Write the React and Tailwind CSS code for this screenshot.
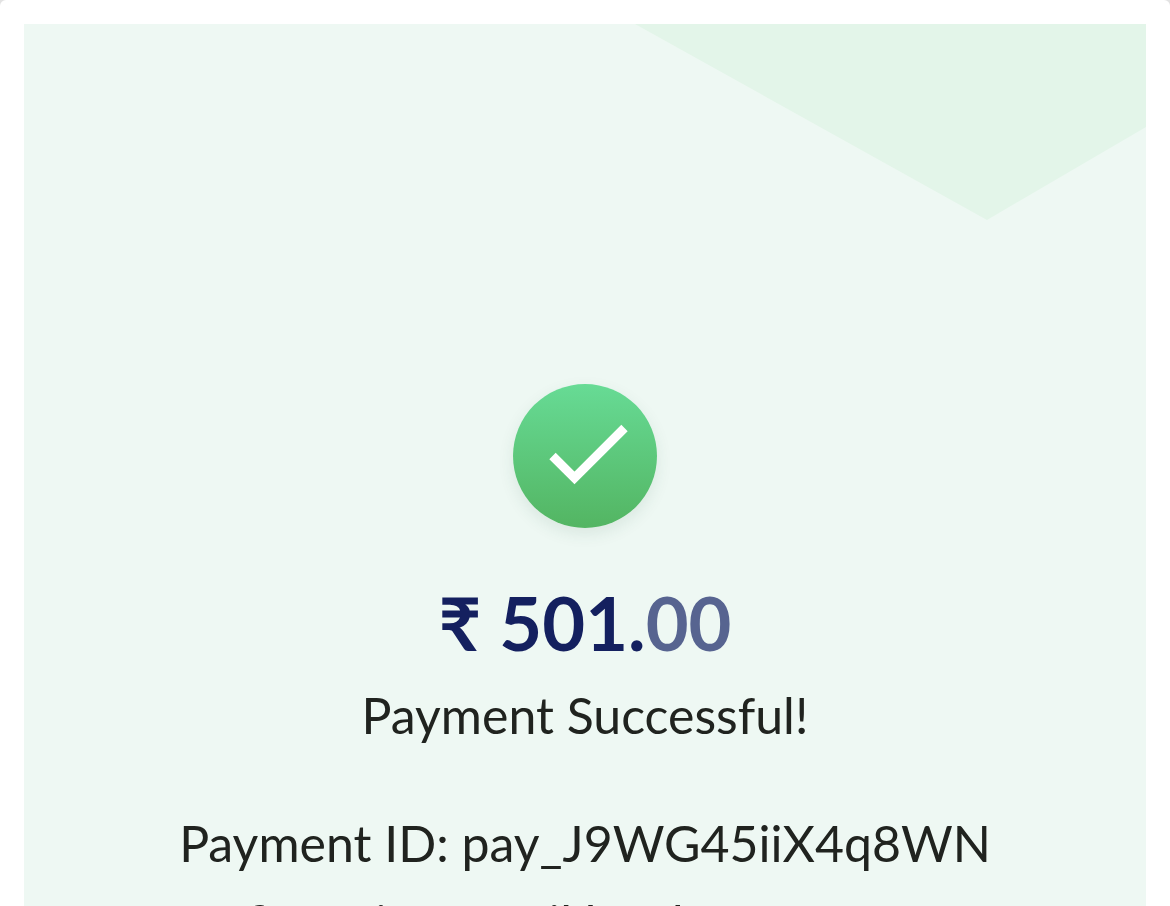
function CornerShape() {
  return (
    <svg
      className="absolute top-0 right-0 h-[197px] w-[511px]"
      viewBox="0 0 511 197"
      aria-hidden="true"
    >
      <path d="M0 0H511V103L352 196Z" fill="#e3f5e9" />
    </svg>
  );
}

function SuccessBadge() {
  return (
    <div className="flex size-36 items-center justify-center rounded-full bg-linear-to-b from-[#67db95] to-[#53b562] shadow-[0_6px_16px_rgba(40,90,70,0.1)]">
      <svg className="size-36" viewBox="0 0 144 144" fill="none" role="img" aria-label="Success">
        <path d="M39.5 72L61.5 94L111.5 44" stroke="#fff" strokeWidth="9" />
      </svg>
    </div>
  );
}

export default function App() {
  return (
    <div className="h-screen overflow-hidden bg-[#e2e2e2] font-['Lato','Noto_Sans',sans-serif]">
      <div className="min-h-full rounded-t-md bg-white p-6 pb-0">
        <main className="relative flex flex-col items-center overflow-hidden bg-[#eef8f3] px-6 pt-[360px] pb-16 text-center text-[#20231f]">
          <CornerShape />
          <SuccessBadge />
          <h1 className="mt-[50px] text-[74px] leading-[90px] font-bold text-[#14205f]">
            ₹ 501.<span className="text-[#576490]">00</span>
          </h1>
          <p className="mt-2 text-[50px] leading-[78px]">Payment Successful!</p>
          <p className="mt-[50px] text-[50px] leading-[78px]">Payment ID: pay_J9WG45iiX4q8WN</p>
          <p className="mt-0.5 text-[50px] leading-[78px]">A confirmation email has been sent to you.</p>
        </main>
      </div>
    </div>
  );
}
